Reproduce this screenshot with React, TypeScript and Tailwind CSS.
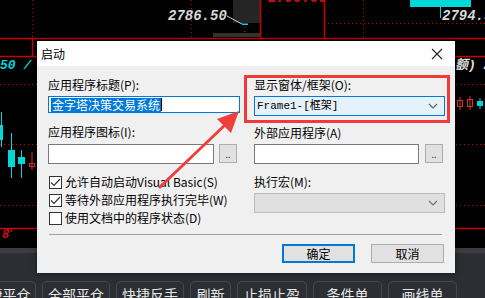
import React from 'react';

const cjk = { fontFamily: '"Noto Sans CJK SC", "Noto Sans", sans-serif' };
const mono = { fontFamily: '"Liberation Mono", "Noto Sans CJK SC", monospace' };

const Chevron = ({ color = '#606060' }: { color?: string }) => (
  <svg width="10" height="6" viewBox="0 0 10 6">
    <path d="M1 1 L5 5 L9 1" fill="none" stroke={color} strokeWidth="1.1" />
  </svg>
);

const Check = ({ checked }: { checked: boolean }) => (
  <span className="flex h-[13px] w-[13px] items-center justify-center border border-[#333] bg-white">
    {checked && (
      <svg width="11" height="9" viewBox="0 0 11 9">
        <path d="M1 4.5 L4 7.5 L10 1" fill="none" stroke="#333" strokeWidth="1.2" />
      </svg>
    )}
  </span>
);

const Chart = () => (
  <svg className="absolute left-0 top-0" width="485" height="248">
    <rect x="233" y="0" width="27" height="23" fill="#252525" />
    <rect x="213" y="33" width="47" height="4" fill="#333" />
    <g stroke="#c80000" strokeWidth="1.5">
      <line x1="0" y1="38.5" x2="485" y2="38.5" />
      <line x1="260.5" y1="0" x2="260.5" y2="38" />
      <line x1="324.5" y1="0" x2="324.5" y2="38" />
      <line x1="32.5" y1="38" x2="32.5" y2="56" />
      <line x1="0" y1="56.5" x2="485" y2="56.5" />
      <line x1="0" y1="228.5" x2="485" y2="228.5" />
      <line x1="11.5" y1="228" x2="11.5" y2="232" />
    </g>
    <g stroke="#c80000" strokeWidth="1" strokeDasharray="1 3">
      <line x1="32.5" y1="0" x2="32.5" y2="38" />
      <line x1="191.5" y1="0" x2="191.5" y2="38" />
      <line x1="363.5" y1="0" x2="363.5" y2="38" />
      <line x1="244.5" y1="27" x2="244.5" y2="38" />
      <line x1="324" y1="23.5" x2="485" y2="23.5" />
      <line x1="0" y1="84.5" x2="485" y2="84.5" />
      <line x1="0" y1="144.5" x2="485" y2="144.5" />
      <line x1="0" y1="205.5" x2="485" y2="205.5" />
    </g>
    <line x1="227" y1="16" x2="242" y2="24" stroke="#d0d0d0" strokeWidth="1" />
    <rect x="242" y="23.5" width="6" height="1.5" fill="#00d8d8" />
    <rect x="410" y="0" width="61" height="7" fill="#00d8d8" />
    <rect x="440" y="7" width="1" height="11" fill="#00d8d8" />
    <g fill="#00d8d8">
      <rect x="0" y="125" width="3" height="15" />
      <rect x="1" y="112" width="1" height="35" />
      <rect x="11" y="133" width="1" height="45" />
      <rect x="8" y="150" width="7" height="17" />
      <rect x="21" y="150" width="1" height="28" />
      <rect x="18" y="157" width="7" height="7" />
      <rect x="477" y="101" width="6" height="5" />
      <rect x="479.5" y="98" width="1" height="11" />
    </g>
    <g fill="none" stroke="#e03030" strokeWidth="1">
      <rect x="29.5" y="163.5" width="5" height="3" />
      <line x1="32" y1="152" x2="32" y2="170" />
      <rect x="457.5" y="100.5" width="5" height="6" />
      <line x1="460" y1="97" x2="460" y2="110" />
      <rect x="467.5" y="99.5" width="5" height="7" />
      <line x1="470" y1="96" x2="470" y2="110" />
    </g>
  </svg>
);

const ChartText = () => (
  <>
    <span className="absolute left-[168px] top-[8px] whitespace-nowrap text-[14px] font-bold italic leading-[16px] text-[#d8d8d8]" style={mono}>
      2786.50
    </span>
    <span className="absolute left-[442px] top-[8px] whitespace-nowrap text-[14px] font-bold italic leading-[16px] text-[#d8d8d8]" style={mono}>
      2794.50
    </span>
    <span className="absolute left-[268px] top-[-10px] whitespace-nowrap text-[14px] font-bold italic leading-[16px] text-[#d01010]" style={mono}>
      2790.00
    </span>
    <span className="absolute left-[0px] top-[59px] whitespace-nowrap text-[13px] font-bold italic leading-[14px] text-[#00d8d8]" style={mono}>
      50 / 高
    </span>
    <span className="absolute left-[455px] top-[59px] whitespace-nowrap text-[13px] font-bold italic leading-[14px] text-[#e0e0e0]" style={mono}>
      额) 24
    </span>
    <span className="absolute left-[2px] top-[229px] text-[12px] font-bold italic leading-[12px] text-[#d01010]" style={mono}>
      8
    </span>
  </>
);

const Toolbar = () => {
  const items: [string, string][] = [
    ['快捷平仓', 'w-[67px]'],
    ['全部平仓', 'w-[68px]'],
    ['快捷反手', 'w-[68px]'],
    ['刷新', 'w-[41px]'],
    ['止损止盈', 'w-[70px]'],
    ['条件单', 'w-[69px]'],
    ['画线单', 'w-[69px]'],
  ];
  return (
    <div className="flex flex-1 flex-col bg-[#2b2e33]">
      <div className="h-[5px] bg-[#3c3d3f]" />
      <div className="ml-[-31px] mt-[28px] flex gap-[6px]">
        {items.map(([t, w]) => (
          <div
            key={t}
            className={`${w} h-[26px] shrink-0 rounded-[5px] border border-[#45484d] pt-[3px] text-center text-[14px] leading-[18px] text-[#e8e8e8]`}
            style={cjk}
          >
            {t}
          </div>
        ))}
      </div>
    </div>
  );
};

const Dialog = () => (
  <div className="absolute left-[37px] top-[41px] flex h-[232px] w-[418px] flex-col bg-[#f0f0f0] text-[12px] text-black shadow-[0_0_6px_rgba(0,0,0,0.5)]" style={cjk}>
    <div className="flex h-[25px] items-center justify-between bg-white pl-[4px] pr-[12px]">
      <span className="leading-[14px]">启动</span>
      <svg width="12" height="12" viewBox="0 0 12 12">
        <path d="M1 1 L11 11 M11 1 L1 11" stroke="#222" strokeWidth="1.1" />
      </svg>
    </div>
    <div className="flex h-[161px] gap-[14px] pl-[11px] pr-[10px] pt-[12px]">
      <div className="flex w-[192px] flex-col">
        <span className="h-[14px] leading-[14px]">应用程序标题(P):</span>
        <div className="mt-[4px] flex h-[17px] items-center border border-[#0078d7] bg-white pl-[2px]">
          <span className="bg-[#0078d7] px-[1px] leading-[14px] text-white">金字塔决策交易系统</span>
          <span className="h-[13px] w-px bg-black" />
        </div>
        <span className="mt-[12px] h-[14px] leading-[14px]">应用程序图标(I):</span>
        <div className="mt-[5px] flex gap-[5px]">
          <div className="h-[20px] w-[166px] border border-[#7a7a7a] bg-white" />
          <div className="flex h-[19px] w-[18px] items-end justify-center border border-[#adadad] bg-[#e1e1e1] pb-[3px] text-[9px] leading-[9px] text-[#333]">..</div>
        </div>
        <div className="mt-[9px] flex flex-col">
          {[
            ['允许自动启动Visual Basic(S)', true],
            ['等待外部应用程序执行完毕(W)', true],
            ['使用文档中的程序状态(D)', false],
          ].map(([t, c]) => (
            <div key={t as string} className="flex h-[18px] items-center gap-[3px] pl-[1px]">
              <Check checked={c as boolean} />
              <span className="leading-[14px]">{t as string}</span>
            </div>
          ))}
        </div>
      </div>
      <div className="flex w-[191px] flex-col">
        <span className="h-[14px] leading-[14px]">显示窗体/框架(O):</span>
        <div className="mt-[4px] flex h-[20px] items-center justify-between border border-[#0078d7] bg-[#e5f1fb] pl-[2px] pr-[6px]">
          <span className="text-[11px] leading-[14px]" style={mono}>Frame1-[框架]</span>
          <Chevron />
        </div>
        <span className="mt-[10px] h-[14px] leading-[14px]">外部应用程序(A)</span>
        <div className="mt-[4px] flex gap-[6px]">
          <div className="h-[20px] w-[165px] border border-[#7a7a7a] bg-white" />
          <div className="flex h-[19px] w-[18px] items-end justify-center border border-[#adadad] bg-[#e1e1e1] pb-[3px] text-[9px] leading-[9px] text-[#333]">..</div>
        </div>
        <span className="mt-[11px] h-[14px] leading-[14px]">执行宏(M):</span>
        <div className="mt-[4px] flex h-[20px] items-center justify-end border border-[#bcbcbc] bg-[#e0e0e0] pr-[6px]">
          <Chevron color="#707070" />
        </div>
      </div>
    </div>
    <div className="ml-[12px] mr-[13px] mt-[7px] h-px bg-[#a0a0a0]" />
    <div className="mt-[9px] flex justify-end gap-[16px] pr-[11px]">
      <div className="flex h-[19px] w-[73px] items-center justify-center border-2 border-[#0078d7] bg-[#e1e1e1] leading-[14px]">确定</div>
      <div className="flex h-[19px] w-[73px] items-center justify-center border border-[#adadad] bg-[#e1e1e1] leading-[14px]">取消</div>
    </div>
  </div>
);

const Annotation = () => (
  <>
    <div className="absolute left-[244px] top-[75px] h-[48px] w-[206px] border-[3px] border-[#f03a3a]" />
    <svg className="pointer-events-none absolute left-0 top-0" width="485" height="298">
      <path d="M158 187 L224 124 L226 126 L160 189 Z" fill="#ee3f3a" />
      <path d="M239 111 L217 119 L231 133 Z" fill="#ee3f3a" />
    </svg>
  </>
);

export default function App() {
  return (
    <div className="relative flex h-[298px] w-[485px] flex-col overflow-hidden bg-black">
      <div className="relative h-[248px] shrink-0">
        <Chart />
        <ChartText />
      </div>
      <Toolbar />
      <Dialog />
      <Annotation />
    </div>
  );
}
